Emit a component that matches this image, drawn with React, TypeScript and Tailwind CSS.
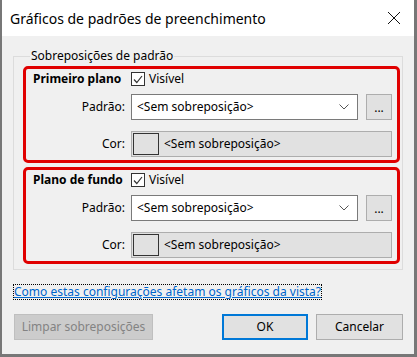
import React from 'react';

function CheckBox() {
  return (
    <span className="w-[14px] h-[14px] border border-[#333333] bg-white flex items-center justify-center">
      <svg width="10" height="9" viewBox="0 0 10 9">
        <path d="M1 4.5 L3.8 7.5 L9 1" fill="none" stroke="#333333" strokeWidth="1.2" />
      </svg>
    </span>
  );
}

function OverrideBox({ title }: { title: string }) {
  return (
    <div className="border-[3px] border-[#e00000] rounded-[5px] pb-[3px] pr-[4px]">
      {/* header */}
      <div className="flex items-center h-[20px]">
        <div className="w-[105px] pl-[7px] font-bold text-black">{title}</div>
        <CheckBox />
        <span className="ml-[4px]">Visível</span>
      </div>

      {/* Padrão */}
      <div className="flex items-center mt-[5px] h-[26px]">
        <div className="w-[99px] text-right">Padrão:</div>
        <div className="ml-[6px] w-[227px] h-[26px] bg-white border border-[#7a7a7a] flex items-center justify-between pl-[5px] pr-[8px]">
          <span>&lt;Sem sobreposição&gt;</span>
          <svg width="10" height="6" viewBox="0 0 10 6">
            <path d="M0.5 0.5 L5 5 L9.5 0.5" fill="none" stroke="#555555" strokeWidth="1" />
          </svg>
        </div>
        <button className="ml-[8px] w-[26px] h-[26px] bg-[#e1e1e1] border border-[#adadad] flex items-end justify-center pb-[5px] leading-none">
          ...
        </button>
      </div>

      {/* Cor */}
      <div className="flex items-center mt-[11px] h-[26px]">
        <div className="w-[99px] text-right">Cor:</div>
        <div className="ml-[6px] w-[261px] h-[26px] bg-[#e1e1e1] border border-[#adadad] flex items-center pl-[1px]">
          <span className="w-[26px] h-[22px] bg-[#e1e1e1] border border-[#333333]" />
          <span className="ml-[5px]">&lt;Sem sobreposição&gt;</span>
        </div>
      </div>
    </div>
  );
}

export default function App() {
  return (
    <div
      className="w-[417px] h-[357px] bg-[#f0f0f0] border-l-2 border-r-[3px] border-b-[3px] border-[#777777] flex flex-col text-[12px] text-black"
      style={{ fontFamily: '"Noto Sans", sans-serif' }}
    >
      {/* title bar */}
      <div className="h-[36px] bg-white flex items-center justify-between pl-[8px] pr-[13px] shrink-0">
        <span className="text-[14px]">Gráficos de padrões de preenchimento</span>
        <svg width="14" height="14" viewBox="0 0 14 14">
          <path d="M1 1 L13 13 M13 1 L1 13" stroke="#111111" strokeWidth="1" />
        </svg>
      </div>

      <div className="pl-[11px] pt-[12px] flex flex-col">
        <fieldset className="w-[390px] border border-[#dcdcdc] pl-[9px] pr-[2px] pb-[5px]">
          <legend className="ml-[7px] px-[1px] h-[16px] leading-[16px]">Sobreposições de padrão</legend>
          <div className="mt-[2px]">
            <OverrideBox title="Primeiro plano" />
          </div>
          <div className="mt-[4px]">
            <OverrideBox title="Plano de fundo" />
          </div>
        </fieldset>

        <div className="mt-[14px] flex">
          <a className="border border-dotted border-black text-[#0066cc] underline leading-[14px] h-[16px]">
            Como estas configurações afetam os gráficos da vista?
          </a>
        </div>

        <div className="mt-[14px] flex items-center pr-[11px]">
          <button className="ml-[1px] w-[139px] h-[26px] bg-[#cccccc] border border-[#bfbfbf] text-[#838383]">
            Limpar sobreposições
          </button>
          <button className="ml-auto w-[86px] h-[26px] bg-[#e1e1e1] border-2 border-[#0078d7]">OK</button>
          <button className="ml-[8px] w-[87px] h-[26px] bg-[#e1e1e1] border border-[#adadad]">Cancelar</button>
        </div>
      </div>
    </div>
  );
}
